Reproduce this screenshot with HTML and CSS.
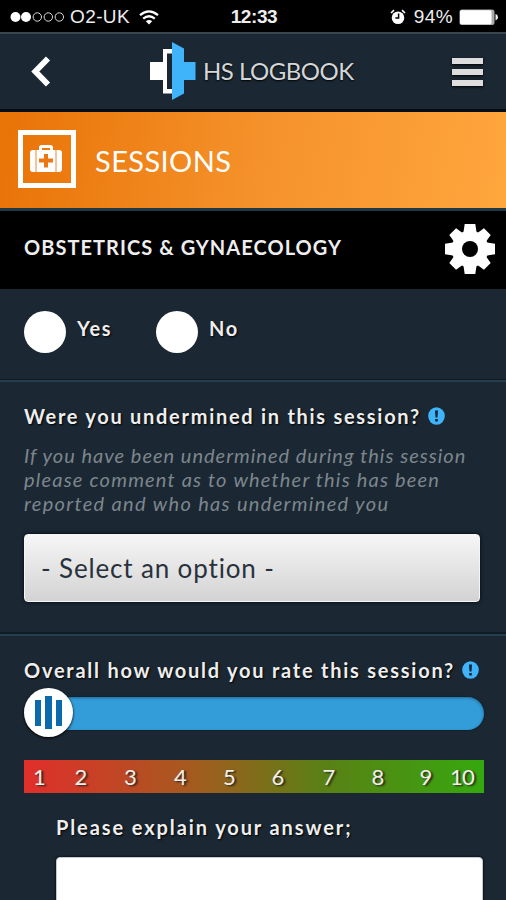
FILE: index.html
```html
<!DOCTYPE html>
<html lang="en">
<head>
<meta charset="utf-8">
<meta name="viewport" content="width=device-width, initial-scale=1">
<title>HS Logbook</title>
<link rel="stylesheet" href="styles.css">
</head>
<body>
<div class="status">
  <div class="carrier">
    <svg class="signal" width="55" height="12" viewBox="0 0 55 12"><g fill="#fff"><circle cx="5.5" cy="6" r="5"/><circle cx="16" cy="6" r="5"/></g><g fill="none" stroke="#ddd" stroke-width="1"><circle cx="27.3" cy="6" r="4.2"/><circle cx="38.3" cy="6" r="4.2"/><circle cx="49.3" cy="6" r="4.2"/></g></svg>
    <span class="operator">O2-UK</span>
    <svg class="wifi" width="20" height="15" viewBox="0 0 20 15"><g fill="none" stroke="#fff" stroke-width="2.2"><path d="M1 5.2Q10-2.6 19 5.2"/><path d="M4.2 8.7Q10 3.8 15.8 8.7"/></g><path d="M6.8 11.2Q10 8.6 13.2 11.2L10 14.4Z" fill="#fff"/></svg>
  </div>
  <div class="clock">12:33</div>
  <div class="power">
    <svg class="alarm" width="16" height="16" viewBox="0 0 16 16"><circle cx="8" cy="8.7" r="6.3" fill="#fff"/><path d="M1 4L4 1.2M15 4L12 1.2" stroke="#fff" stroke-width="1.6"/><path d="M8.6 4.6V9H5.3" fill="none" stroke="#000" stroke-width="1.5"/></svg>
    <span class="percent">94%</span>
    <svg class="battery" width="39" height="17" viewBox="0 0 39 17"><rect x=".5" y=".5" width="35" height="15.5" rx="2.5" fill="#aaa"/><rect x="1" y="1.2" width="31.5" height="14" rx="1.5" fill="#fff"/><path d="M36.5 5Q39 5.500 39 8.200Q39 11 36.500 11.500Z" fill="#eee"/></svg>
  </div>
</div>
<header class="header">
  <svg class="back" width="20" height="31" viewBox="0 0 20 31"><path d="M17 2.500L4.300 15.500L17 28.500" fill="none" stroke="#fff" stroke-width="5.800"/></svg>
  <div class="brand">
    <svg class="logo" width="47" height="60" viewBox="0 0 47 60"><path d="M1 20H14V7H24V51.500H14V38H1Z" fill="#fff"/><path d="M18 11.500H24V47H18Z" fill="#1b2833"/><path d="M23 0L35 6.500V20H46.500V38H35V51.500L23 58Z" fill="#3fb4fa"/></svg>
    <span class="brand-name">HS LOGBOOK</span>
  </div>
  <div class="menu"><i></i><i></i><i></i></div>
</header>
<div class="banner">
  <div class="banner-icon"><svg width="34" height="30" viewBox="0 0 34 30"><path d="M9 6V3.500Q9 1 11.500 1H20.500Q23 1 23 3.500V6H20V4H12V6Z" fill="#fff"/><path d="M3 6H5V28H3Q0 28 0 25V9Q0 6 3 6ZM7 6H25V28H7ZM27 6H29Q32 6 32 9V25Q32 28 29 28H27Z" fill="#fff"/><path d="M5 6H7V28H5ZM25 6H27V28H25Z" fill="#f9c39a"/><path d="M14 10H18V14.500H23V18.500H18V23.500H14V18.500H9V14.500H14Z" fill="#eb7913"/></svg></div>
  <h1 class="banner-title">SESSIONS</h1>
</div>
<div class="specialty">
  <h2 class="specialty-name">OBSTETRICS &amp; GYNAECOLOGY</h2>
  <svg class="gear" width="50" height="50" viewBox="-25 -25 50 50"><g fill="#fff"><circle r="18.500"/><g><path d="M-6.500-17L-5.300-25H5.300L6.500-17ZM-6.500 17L-5.300 25H5.300L6.500 17Z"/><path d="M-17-6.500L-25-5.300V5.300L-17 6.500ZM17-6.500L25-5.300V5.300L17 6.500Z"/></g><g transform="rotate(45)"><path d="M-6-17L-4.800-24.500H4.800L6-17ZM-6 17L-4.800 24.500H4.800L6 17Z"/><path d="M-17-6L-24.500-4.800V4.800L-17 6ZM17-6L24.500-4.800V4.800L17 6Z"/></g></g><circle r="8" fill="#000"/></svg>
</div>
<section class="choices">
  <label class="choice"><i class="radio"></i><span>Yes</span></label>
  <label class="choice"><i class="radio"></i><span>No</span></label>
</section>
<section class="question undermined">
  <div class="label"><span class="q1">Were you undermined in this session?</span><svg class="info" width="17" height="18" viewBox="0 0 17 18"><ellipse cx="8.500" cy="9" rx="8.300" ry="8.800" fill="#3fb4fa"/><path d="M7 3.500H10L9.500 10.500H7.500ZM7.200 12H9.800V14.500H7.200Z" fill="#14232f"/></svg></div>
  <p class="hint"><span class="h1">If you have been undermined during this session</span><br><span class="h2">please comment as to whether this has been</span><br><span class="h3">reported and who has undermined you</span></p>
  <div class="select"><span>- Select an option -</span></div>
</section>
<section class="question rating">
  <div class="label"><span class="q2">Overall how would you rate this session?</span><svg class="info" width="17" height="18" viewBox="0 0 17 18"><ellipse cx="8.500" cy="9" rx="8.300" ry="8.800" fill="#3fb4fa"/><path d="M7 3.500H10L9.500 10.500H7.500ZM7.200 12H9.800V14.500H7.200Z" fill="#14232f"/></svg></div>
  <div class="slider"><div class="knob"><i></i><i class="tall"></i><i></i></div></div>
  <div class="scale"><span>1</span><span>2</span><span>3</span><span>4</span><span>5</span><span>6</span><span>7</span><span>8</span><span>9</span><span class="ten">10</span></div>
  <div class="explain"><div class="label"><span class="q3">Please explain your answer;</span></div><div class="answer"></div></div>
</section>
</body>
</html>
```

FILE: styles.css
```css
* { box-sizing: border-box; }
html, body { margin: 0; height: 900px; overflow: hidden; }
body { background: #1b2833; color: #eee; font-family: "Century Gothic", Lato, sans-serif; white-space: nowrap; font-variant-ligatures: none; }
svg { display: block; flex: none; }
h1, h2, p { margin: 0; }

.status { height: 32px; background: #000; display: grid; grid-template-columns: 1fr auto 1fr; align-items: center; padding: 2px 8px 0 10px; font-family: "Liberation Sans", sans-serif; font-size: 19px; line-height: 30px; }
.carrier, .power { display: flex; align-items: center; }
.operator { margin-left: 5px; letter-spacing: .4px; }
.wifi { margin-left: 9px; }
.clock { font-weight: bold; letter-spacing: -.4px; }
.power { justify-content: flex-end; }
.percent { margin: 0 6px 0 8px; letter-spacing: .4px; }

.header { height: 77px; border-top: 2px solid #3a464d; display: flex; align-items: center; padding: 0 23px 0 31px; }
.brand { display: flex; align-items: center; margin-left: 98px; }
.brand-name { margin: -3px 0 0 7px; font-size: 24px; letter-spacing: -.5px; color: #d4d6d8; text-shadow: 0 1px 2px #000; }
.menu { margin-left: auto; width: 31px; display: flex; flex-direction: column; gap: 5px; }
.menu i { height: 6px; background: #ddd; box-shadow: 0 1px 3px #000; }

.banner { height: 102px; border-top: 3px solid #050e17; border-bottom: 3px solid #203947; background: linear-gradient(100deg, #e87306, #f5912a 50%, #ffa63d); display: flex; align-items: center; padding: 0 0 2px 18px; }
.banner-icon { width: 58px; height: 58px; border: 5px solid #fff; display: grid; place-items: center; }
.banner-title { margin: 2px 0 0 19px; font-size: 29px; font-weight: 400; color: #fff; letter-spacing: .4px; }

.specialty { height: 78px; background: #000; display: flex; align-items: center; justify-content: space-between; padding: 0 11px 2px 24px; }
.specialty-name { margin-top: -4px; font-size: 20px; font-weight: 700; letter-spacing: 1.05px; }

.choices { height: 91px; display: flex; padding: 22px 0 0 24px; border-bottom: 1px solid #101a22; }
.choice { display: flex; width: 132px; font-size: 20px; font-weight: 700; line-height: 34px; letter-spacing: 1.7px; text-shadow: 1px 1px 2px #000; }
.radio { width: 42px; height: 42px; border-radius: 50%; background: #fff; margin-right: 11px; }

.question { border-top: 2px solid #24404f; padding: 0 24px; }
.undermined { height: 254px; padding-top: 19px; border-bottom: 2px solid #101a22; }
.label { display: flex; align-items: center; height: 30px; font-size: 20px; font-weight: 700; text-shadow: 1px 1px 2px #000; gap: 7px; }
.q1 { letter-spacing: 1.72px; }
.q2 { letter-spacing: 1.76px; }
.q3 { letter-spacing: 1.9px; }
.hint { margin-top: 12px; font-size: 20px; font-style: italic; line-height: 24px; color: #7d868d; }
.h1 { letter-spacing: 1px; }
.h2 { letter-spacing: 1.2px; }
.h3 { letter-spacing: 1.33px; }
.select { width: 456px; height: 68px; margin-top: 19px; border-radius: 4px; border: 1px solid #f5f5f5; background: linear-gradient(#f6f6f6, #d3d3d3); box-shadow: 0 0 4px #000714; color: #29323c; font-size: 26px; letter-spacing: .85px; line-height: 66px; padding-left: 16px; }
.rating { padding-top: 19px; }
.slider { height: 33px; width: 460px; margin-top: 12px; border-radius: 17px; background: #339dda; box-shadow: inset 0 1px 3px #1d668f, 0 0 2px #081722; display: flex; align-items: center; }
.knob { width: 49px; height: 49px; flex: none; margin-top: -2px; border-radius: 50%; background: #fff; box-shadow: 0 1px 3px #000; display: flex; align-items: center; justify-content: center; gap: 4px; }
.knob i { width: 6px; height: 26px; background: #0c69ac; }
.knob .tall { width: 7px; height: 33px; }
.scale { height: 33px; width: 460px; margin-top: 30px; background: linear-gradient(90deg, #e12e2b, #a8581f 35%, #5a8015 65%, #36a80e); display: grid; grid-template-columns: 31px 52px 47px 53px 45px 52px 50px 48px 48px 24px; text-align: center; font-size: 22px; line-height: 34px; color: #f4eee6; text-shadow: 2px 1px 2px #222; }
.ten { letter-spacing: -.8px; }
.explain { padding-left: 32px; margin-top: 19px; }
.answer { width: 427px; height: 60px; margin-top: 15px; background: #fff; border-radius: 4px 4px 0 0; border: 1px solid #c5c9d2; box-shadow: 0 0 3px #000; }
```
